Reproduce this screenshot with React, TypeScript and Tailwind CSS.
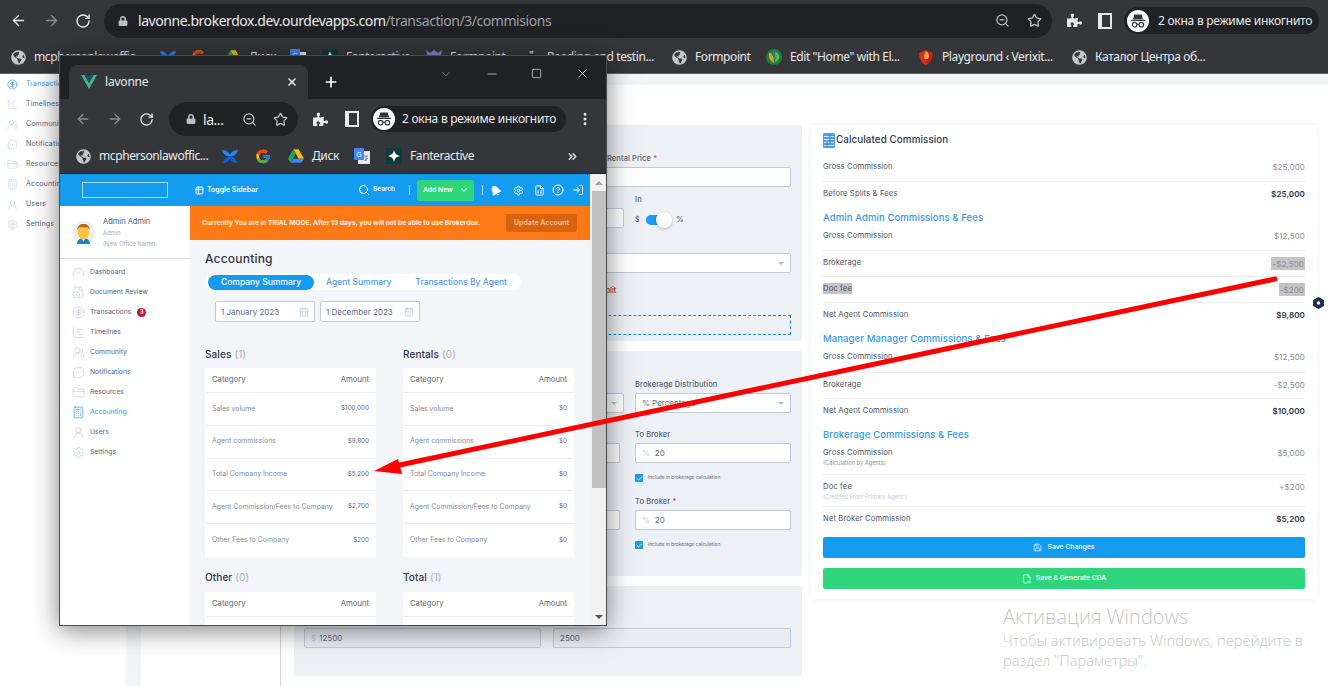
import {
  ArrowLeft,
  ArrowRight,
  RotateCw,
  ZoomOut,
  Star,
  X,
  Plus,
  Minus,
  Square,
  ChevronDown,
  ChevronsRight,
  EllipsisVertical,
  Search,
  Settings,
  FileSpreadsheet,
  CircleHelp,
  LogIn,
  Table2,
  Gauge,
  FileClock,
  CircleDollarSign,
  ChartGantt,
  UsersRound,
  MessageCircleMore,
  FolderClosed,
  Calculator,
  UserRound,
  CalendarDays,
  Check,
  Save,
  FilePlus2,
} from 'lucide-react'
import { FaGlobeAmericas, FaPuzzlePiece, FaLock, FaBell } from 'react-icons/fa'
import { FcGoogle } from 'react-icons/fc'
import type { ReactNode } from 'react'

const navItems = [
  { label: 'Dashboard', icon: Gauge },
  { label: 'Document Review', icon: FileClock },
  { label: 'Transactions', icon: CircleDollarSign, badge: 3 },
  { label: 'Timelines', icon: ChartGantt },
  { label: 'Community', icon: UsersRound },
  { label: 'Notifications', icon: MessageCircleMore },
  { label: 'Resources', icon: FolderClosed },
  { label: 'Accounting', icon: Calculator, active: true },
  { label: 'Users', icon: UserRound },
  { label: 'Settings', icon: Settings },
]

const backNav = [
  { label: 'Transactions', icon: CircleDollarSign, active: true },
  { label: 'Timelines', icon: ChartGantt },
  { label: 'Community', icon: UsersRound },
  { label: 'Notifications', icon: MessageCircleMore },
  { label: 'Resources', icon: FolderClosed },
  { label: 'Accounting', icon: Calculator },
  { label: 'Users', icon: UserRound },
  { label: 'Settings', icon: Settings },
]

const salesRows = [
  ['Sales volume', '$100,000'],
  ['Agent commissions', '$9,800'],
  ['Total Company Income', '$5,200'],
  ['Agent Commission/Fees to Company', '$2,700'],
  ['Other Fees to Company', '$200'],
]

const rentalRows = [
  ['Sales volume', '$0'],
  ['Agent commissions', '$0'],
  ['Total Company Income', '$0'],
  ['Agent Commission/Fees to Company', '$0'],
  ['Other Fees to Company', '$0'],
]

function DriveIcon() {
  return (
    <svg viewBox="0 0 24 22" className="size-[16px]">
      <path d="M8 1h8l8 14h-8z" fill="#fbbc04" />
      <path d="M8 1 0 15l4 6 8-14z" fill="#1fa463" />
      <path d="M4 21h16l4-6H8z" fill="#4285f4" />
    </svg>
  )
}

function TranslateIcon() {
  return (
    <svg viewBox="0 0 16 16" className="size-[16px]">
      <rect x="4" y="3" width="12" height="13" fill="#e8eaed" />
      <rect width="10" height="12" rx="1" fill="#4285f4" />
      <text x="5" y="9" fontSize="7" fill="#fff" textAnchor="middle" fontFamily="Liberation Sans">G</text>
      <path d="M10 8h4M12 8v5M10.5 13l3-3" stroke="#80868b" fill="none" />
    </svg>
  )
}

function FanteractiveIcon() {
  return (
    <svg viewBox="0 0 16 16" className="size-[16px]">
      <rect width="16" height="16" rx="1" fill="#0d3b3a" />
      <path d="M8 2c.6 3.6 2.400 5.400 6 6-3.600.6-5.400 2.400-6 6-.6-3.600-2.400-5.400-6-6 3.600-.6 5.400-2.400 6-6z" fill="#fff" />
    </svg>
  )
}

function BirdIcon() {
  return (
    <svg viewBox="0 0 16 16" className="size-[17px]">
      <path d="M0 1.500c4 0 6 2 8 4.500 2-2.500 4-4.500 8-4.500-1 4-4 6.500-8 6.500S1 5.500 0 1.500z" fill="#2684ff" />
      <path d="M1 14.500c1-4 3.500-6.500 7-6.500s6 2.500 7 6.500c-3.500 0-5.500-1.500-7-4-1.500 2.500-3.500 4-7 4z" fill="#0a5fd6" />
    </svg>
  )
}

function FormpointIcon() {
  return (
    <svg viewBox="0 0 16 16" className="size-[16px]">
      <path d="M0 1l4 3 4-3 4 3 4-3-3 14H3z" fill="#8e7bd8" />
      <path d="M5 6h6l-2 8H7z" fill="#f5c842" />
    </svg>
  )
}

function ReadingIcon() {
  return (
    <svg viewBox="0 0 16 16" className="size-[15px]">
      <rect x="6" y="1" width="4" height="3" fill="#aab0b6" />
      <path d="M5 4h6l2 11H3z" fill="#202124" />
      <rect x="5" y="8" width="6" height="3" fill="#9aa0a6" />
    </svg>
  )
}

function GreenGlobeIcon() {
  return (
    <svg viewBox="0 0 16 16" className="size-[16px]">
      <circle cx="8" cy="8" r="8" fill="#1d7f3c" />
      <path d="M3 4c3 0 5 3 5 10-3-1-6-5-5-10z" fill="#d9a520" />
      <path d="M9 3c3 0 5 3 4 7-1 2-3 3-4 3z" fill="#54b948" />
      <path d="M7 2c1 2 2 4 2 8" stroke="#2a6fd6" fill="none" strokeWidth="1.500" />
    </svg>
  )
}

function ShieldIcon() {
  return (
    <svg viewBox="0 0 16 16" className="size-[16px]">
      <path d="M1 4 8 1v15C4 14 1 10 1 4z" fill="#d93025" />
      <path d="M15 4 8 1v15c4-2 7-6 7-12z" fill="#c5221f" />
      <path d="M8 2c3 2 4 5 2 8H7C5 7 7 5 8 2z" fill="#f9ab30" />
    </svg>
  )
}

function IncognitoAvatar({ size }: { size: string }) {
  return (
    <svg viewBox="0 0 24 24" className={size}>
      <circle cx="12" cy="12" r="12" fill="#fff" />
      <path d="M8 5h8l1.500 5h-11zM4.500 10.500h15V12h-15z" fill="#35363a" />
      <circle cx="8.300" cy="16" r="2.500" fill="none" stroke="#35363a" strokeWidth="1.200" />
      <circle cx="15.700" cy="16" r="2.500" fill="none" stroke="#35363a" strokeWidth="1.200" />
      <path d="M10.800 15.500h2.400" stroke="#35363a" strokeWidth="1.200" />
    </svg>
  )
}

function SidePanelIcon() {
  return (
    <svg viewBox="0 0 14 16" className="h-[16px] w-[14px]">
      <rect x="1" y="1" width="12" height="14" fill="none" stroke="#e8eaed" strokeWidth="2" />
      <rect x="1" y="1" width="3" height="14" fill="#e8eaed" />
    </svg>
  )
}

function Bookmark({ width, icon, label }: { width: string; icon: ReactNode; label?: string }) {
  return (
    <div className={`flex shrink-0 items-center gap-[8px] ${width}`}>
      <span className="flex w-[16px] shrink-0 justify-center">{icon}</span>
      {label ? <span className="whitespace-nowrap text-[12px] tracking-[-0.4px] text-[#e8eaed]">{label}</span> : null}
    </div>
  )
}

const globe = <FaGlobeAmericas className="size-[15px] text-[#c4c7c5]" />

function BrowserBar() {
  return (
    <div className="font-['Noto_Sans',sans-serif]">
      <div className="flex h-[41px] items-center bg-[#35363a] pl-[10px]">
        <ArrowLeft className="size-[17px] text-[#e8eaed]" />
        <ArrowRight className="ml-[16px] size-[17px] text-[#8a8d91]" />
        <RotateCw className="ml-[15px] size-[16px] text-[#e8eaed]" />
        <div className="ml-[13px] flex h-[34px] w-[948px] items-center rounded-full bg-[#202124] pl-[14px] pr-[10px]">
          <FaLock className="size-[10px] text-[#bdc1c6]" />
          <span className="ml-[10px] whitespace-nowrap text-[14px] tracking-[-0.45px] text-[#e8eaed]">
            lavonne.brokerdox.dev.ourdevapps.com<span className="text-[#9aa0a6]">/transaction/3/commisions</span>
          </span>
          <ZoomOut className="ml-auto size-[15px] text-[#bdc1c6]" />
          <Star className="ml-[17px] size-[15px] text-[#bdc1c6]" />
        </div>
        <FaPuzzlePiece className="ml-[15px] size-[15px] text-[#e8eaed]" />
        <span className="ml-[16px]"><SidePanelIcon /></span>
        <div className="ml-[12px] flex h-[27px] w-[195px] items-center gap-[9px] rounded-full bg-[#202124] pl-[3px]">
          <IncognitoAvatar size="size-[22px]" />
          <span className="whitespace-nowrap text-[12px] tracking-[-0.25px] text-[#e8eaed]">2 окна в режиме инкогнито</span>
        </div>
      </div>
      <div className="flex h-[33px] items-center border-b border-[#5f6368] bg-[#35363a] pl-[10px]">
        <Bookmark width="w-[150px]" icon={globe} label="mcphersonlawoffic" />
        <Bookmark width="w-[31px]" icon={<BirdIcon />} />
        <Bookmark width="w-[34px]" icon={<FcGoogle className="size-[16px]" />} />
        <Bookmark width="w-[65px]" icon={<DriveIcon />} label="Диск" />
        <Bookmark width="w-[32px]" icon={<TranslateIcon />} />
        <Bookmark width="w-[104px]" icon={<FanteractiveIcon />} label="Fanteractive" />
        <Bookmark width="w-[97px]" icon={<FormpointIcon />} label="Formpoint" />
        <Bookmark width="w-[148px]" icon={<ReadingIcon />} label="Reading and testin..." />
        <Bookmark width="w-[95px]" icon={globe} label="Formpoint" />
        <Bookmark width="w-[152px]" icon={<GreenGlobeIcon />} label={'Edit "Home" with El...'} />
        <Bookmark width="w-[153px]" icon={<ShieldIcon />} label="Playground ‹ Verixit..." />
        <Bookmark width="w-[140px]" icon={globe} label="Каталог Центра об..." />
      </div>
    </div>
  )
}

function BackSidebar() {
  return (
    <div className="w-[126px] shrink-0 bg-white pl-[7px]">
      {backNav.map((item) => (
        <div key={item.label} className="flex h-[20px] items-center gap-[8px]">
          <item.icon className={`size-[11px] ${item.active ? 'text-[#3b97e3]' : 'text-[#c3cfe0]'}`} strokeWidth={1.4} />
          <span className={`text-[7px] tracking-[0.15px] ${item.active ? 'text-[#3b97e3]' : 'text-[#5b6577]'}`}>{item.label}</span>
        </div>
      ))}
    </div>
  )
}

function Field({ className, disabled, children }: { className?: string; disabled?: boolean; children?: ReactNode }) {
  return (
    <div
      className={`flex h-[20px] items-center rounded-[2px] border border-[#bfcadb] px-[6px] text-[8px] text-[#5f6b7e] ${disabled ? 'bg-[#e9edf3]' : 'bg-white'} ${className ?? ''}`}
    >
      {children}
    </div>
  )
}

function SelectArrow() {
  return <span className="ml-auto h-0 w-0 border-x-[3.500px] border-t-[3.500px] border-x-transparent border-t-[#b4bdca]" />
}

function FormLabel({ children }: { children: ReactNode }) {
  return <div className="h-[10px] text-[7.500px] font-medium leading-[10px] tracking-[0.1px] text-[#596479]">{children}</div>
}

function IncludeCheck() {
  return (
    <div className="mt-[11px] flex items-center gap-[5px]">
      <span className="flex size-[8px] items-center justify-center rounded-[1px] bg-[#1a9bf0]">
        <Check className="size-[7px] text-white" strokeWidth={3} />
      </span>
      <span className="text-[4.800px] text-[#5f6b7e]">Include in brokerage calculation</span>
    </div>
  )
}

function Required() {
  return <span className="text-[#d8334a]"> *</span>
}

function FormPanels() {
  return (
    <div className="flex w-[508px] flex-col gap-[10px]">
      <div className="h-[216px] rounded-[2px] bg-[#edf0f5] pl-[10px] pr-[11px] pt-[29px]">
        <div className="pl-[303px]">
          <FormLabel>Rental Price<Required /></FormLabel>
        </div>
        <Field className="mt-[3px]" />
        <div className="mt-[8px] flex gap-[11px]">
          <Field className="mt-[13px] w-[320px]" />
          <div>
            <FormLabel>In</FormLabel>
            <div className="mt-[5px] flex h-[20px] items-center text-[7px] font-medium text-[#596479]">
              <span>$</span>
              <span className="relative ml-[6px] h-[10px] w-[25px]">
                <span className="absolute left-0 top-0 h-[10px] w-[18px] rounded-full bg-[#1a9bf0]" />
                <span className="absolute left-[10px] top-[-3px] size-[16px] rounded-full bg-white shadow-[0_1px_3px_rgba(0,0,0,0.25)]" />
              </span>
              <span className="ml-[6px]">%</span>
            </div>
          </div>
        </div>
        <Field className="mt-[23px]"><SelectArrow /></Field>
        <div className="mt-[13px] h-[10px] pl-[280px] text-[7.500px] font-medium leading-[10px] text-[#b5364f]">Add Split</div>
        <div className="mt-[19px] h-[20px] border border-dashed border-[#1a8fd8]" />
      </div>

      <div className="h-[225px] rounded-[2px] bg-[#edf0f5] pl-[10px] pr-[11px] pt-[29px]">
        <div className="pl-[331px]"><FormLabel>Brokerage Distribution</FormLabel></div>
        <div className="mt-[3px] flex gap-[11px]">
          <Field className="w-[320px]"><SelectArrow /></Field>
          <Field className="flex-1">% Percentage<SelectArrow /></Field>
        </div>
        <div className="mt-[17px] pl-[331px]"><FormLabel>To Broker</FormLabel></div>
        <div className="mt-[3px] flex gap-[15px]">
          <Field className="w-[316px]" />
          <Field className="flex-1"><span className="mr-[5px] text-[#c3cbd8]">%</span>20</Field>
        </div>
        <div className="pl-[331px]"><IncludeCheck /></div>
        <div className="mt-[15px] pl-[331px]"><FormLabel>To Broker<Required /></FormLabel></div>
        <div className="mt-[3px] flex gap-[15px]">
          <Field className="w-[316px]" />
          <Field className="flex-1"><span className="mr-[5px] text-[#c3cbd8]">%</span>20</Field>
        </div>
        <div className="pl-[331px]"><IncludeCheck /></div>
      </div>

      <div className="flex h-[90px] gap-[12px] rounded-[2px] bg-[#edf0f5] pl-[10px] pr-[11px] pt-[42px]">
        <Field className="w-[237px]" disabled><span className="mr-[3px] text-[#b8c1ce]">$</span>12500</Field>
        <Field className="flex-1" disabled>2500</Field>
      </div>
    </div>
  )
}

function CalcRow({
  label,
  value,
  note,
  noteLight,
  strong,
  last,
  height,
  markLabel,
  markValue,
}: {
  label: string
  value: string
  note?: string
  noteLight?: boolean
  strong?: boolean
  last?: boolean
  height: string
  markLabel?: boolean
  markValue?: boolean
}) {
  return (
    <div className={`flex justify-between pt-[7px] ${height} ${last ? '' : 'border-b border-[#e9ecf0]'}`}>
      <div>
        <div className="h-[10px] text-[7.700px] leading-[10px] tracking-[0.1px] text-[#4d5565]">
          <span className={markLabel ? 'bg-[#c4c4c4] py-[1px]' : ''}>{label}</span>
        </div>
        {note ? (
          <div className={`h-[10px] text-[5.700px] leading-[10px] ${noteLight ? 'text-[#c3cbd8]' : 'text-[#8a93a3]'}`}>{note}</div>
        ) : null}
      </div>
      <div
        className={`h-[10px] text-[8px] leading-[10px] tracking-[0.1px] ${strong ? 'font-semibold text-[#2d3748]' : 'text-[#8b8f98]'}`}
      >
        <span className={markValue ? 'bg-[#c4c4c4] py-[1.500px] pl-[1px] pr-[1px]' : ''}>{value}</span>
      </div>
    </div>
  )
}

function SectionTitle({ children, height }: { children: ReactNode; height: string }) {
  return (
    <div className={`flex items-end text-[9.500px] font-medium leading-[12px] tracking-[0.1px] text-[#3b97e3] ${height}`}>
      {children}
    </div>
  )
}

function CommissionCard() {
  return (
    <div className="ml-[9px] h-[474px] w-[506px] bg-white px-[12px] pt-[8px] shadow-[0_0_6px_rgba(40,50,70,0.09)]">
      <div className="flex h-[15px] items-center gap-[1px] text-[9.800px] font-medium tracking-[0.1px] text-[#2d3748]">
        <svg viewBox="0 0 12 15" className="h-[15px] w-[12px]">
          <rect width="12" height="15" rx="1" fill="#4ea0ea" />
          <path d="M1 3.500h10M1 6.500h10M1 9.500h10M1 12.500h10" stroke="#dff0ff" strokeWidth="0.900" />
          <path d="M7 2v9M4 9v5" stroke="#1d6fbe" strokeWidth="0.800" />
        </svg>
        Calculated Commission
      </div>
      <div className="mt-[4px]">
        <CalcRow height="h-[30px] pt-[10px]" label="Gross Commission" value="$25,000" />
        <CalcRow height="h-[26px]" label="Before Splits & Fees" value="$25,000" strong last />
        <SectionTitle height="h-[16px]">Admin Admin Commissions &amp; Fees</SectionTitle>
        <CalcRow height="h-[27px]" label="Gross Commission" value="$12,500" />
        <CalcRow height="h-[26px]" label="Brokerage" value="-$2,500" markValue />
        <CalcRow height="h-[26px]" label="Doc fee" value="-$200" markLabel markValue />
        <CalcRow height="h-[26px]" label="Net Agent Commission" value="$9,800" strong last />
        <SectionTitle height="h-[16px]">Manager Manager Commissions &amp; Fees</SectionTitle>
        <CalcRow height="h-[28px]" label="Gross Commission" value="$12,500" />
        <CalcRow height="h-[26px]" label="Brokerage" value="-$2,500" />
        <CalcRow height="h-[26px]" label="Net Agent Commission" value="$10,000" strong last />
        <SectionTitle height="h-[16px]">Brokerage Commissions &amp; Fees</SectionTitle>
        <CalcRow height="h-[34px]" label="Gross Commission" note="(Calculation by Agents)" value="$5,000" />
        <CalcRow height="h-[32px]" label="Doc fee" note="(Credited From Primary Agent )" noteLight value="+$200" />
        <CalcRow height="h-[30px]" label="Net Broker Commission" value="$5,200" strong last />
      </div>
      <div className="flex h-[21px] items-center justify-center gap-[5px] rounded-[2px] bg-[#139bf0] text-[6.800px] font-semibold text-[#e8f5ff]">
        <Save className="size-[9px]" />
        Save Changes
      </div>
      <div className="mt-[10px] flex h-[21px] items-center justify-center gap-[4px] rounded-[2px] bg-[#2fd57a] text-[6.800px] font-semibold text-[#e9fff3]">
        <FilePlus2 className="size-[10px]" />
        Save &amp; Generate CDA
      </div>
    </div>
  )
}

function WindowBar() {
  return (
    <div className="shrink-0 font-['Noto_Sans',sans-serif]">
      <div className="flex h-[43px] items-end bg-[#202124] pl-[9px]">
        <div className="flex h-[34px] w-[239px] items-center rounded-t-[8px] bg-[#35363a] pl-[12px] pr-[10px]">
          <svg viewBox="0 0 16 14" className="h-[14px] w-[16px]">
            <path d="M0 0h3.500L8 8 12.500 0H16L8 14z" fill="#41b883" />
            <path d="M3.500 0h3L8 2.600 9.500 0h3L8 8z" fill="#35495e" />
          </svg>
          <span className="ml-[8px] text-[12px] tracking-[-0.2px] text-[#e8eaed]">lavonne</span>
          <X className="ml-auto size-[12px] text-[#e8eaed]" strokeWidth={3} />
        </div>
        <div className="flex h-[34px] items-center pl-[15px]">
          <Plus className="size-[16px] text-white" strokeWidth={2.500} />
        </div>
        <div className="mb-[18px] ml-auto flex items-center pr-[16px]">
          <ChevronDown className="size-[14px] text-[#c4c7c5]" strokeWidth={1} />
          <Minus className="ml-[32px] size-[14px] text-[#e8eaed]" strokeWidth={1.200} />
          <Square className="ml-[32px] size-[11px] text-[#e8eaed]" strokeWidth={1.500} />
          <X className="ml-[33px] size-[15px] text-[#e8eaed]" strokeWidth={1.200} />
        </div>
      </div>
      <div className="flex h-[40px] items-center bg-[#35363a] pl-[15px]">
        <ArrowLeft className="size-[16px] text-[#8a8d91]" />
        <ArrowRight className="ml-[16px] size-[16px] text-[#8a8d91]" />
        <RotateCw className="ml-[16px] size-[15px] text-[#e8eaed]" />
        <div className="ml-[15px] flex h-[34px] w-[129px] items-center rounded-full bg-[#202124] pl-[17px] pr-[10px]">
          <FaLock className="size-[10px] text-[#bdc1c6]" />
          <span className="ml-[7px] text-[14px] tracking-[-0.45px] text-[#e8eaed]">la...</span>
          <ZoomOut className="ml-auto size-[15px] text-[#bdc1c6]" />
          <Star className="ml-[16px] size-[15px] text-[#bdc1c6]" />
        </div>
        <FaPuzzlePiece className="ml-[15px] size-[15px] text-[#e8eaed]" />
        <span className="ml-[17px]"><SidePanelIcon /></span>
        <div className="ml-[12px] flex h-[26px] w-[195px] items-center gap-[7px] rounded-full bg-[#202124] pl-[2px]">
          <IncognitoAvatar size="size-[22px]" />
          <span className="whitespace-nowrap text-[12px] tracking-[-0.25px] text-[#e8eaed]">2 окна в режиме инкогнито</span>
        </div>
        <EllipsisVertical className="ml-[11px] size-[16px] text-[#e8eaed]" strokeWidth={2.500} />
      </div>
      <div className="flex h-[35px] items-center border-b border-[#202124] bg-[#35363a] pl-[15px]">
        <Bookmark width="w-[147px]" icon={globe} label="mcphersonlawoffic..." />
        <Bookmark width="w-[33px]" icon={<BirdIcon />} />
        <Bookmark width="w-[33px]" icon={<FcGoogle className="size-[17px]" />} />
        <Bookmark width="w-[66px]" icon={<DriveIcon />} label="Диск" />
        <Bookmark width="w-[32px]" icon={<TranslateIcon />} />
        <Bookmark width="w-[180px]" icon={<FanteractiveIcon />} label="Fanteractive" />
        <ChevronsRight className="size-[13px] text-[#e8eaed]" strokeWidth={2.500} />
      </div>
    </div>
  )
}

function TopIcons() {
  return (
    <div className="flex h-[32px] shrink-0 items-center whitespace-nowrap bg-[#139bf0] pl-[22px] pr-[6px] text-white">
      <div className="h-[16px] w-[86px] shrink-0 border border-[#a9dcfa]" />
      <Table2 className="ml-[27px] size-[9px] shrink-0" strokeWidth={2.500} />
      <span className="ml-[3px] text-[7px] font-semibold">Toggle Sidebar</span>
      <Search className="ml-auto size-[12px] shrink-0" />
      <span className="ml-[3px] w-[25px] shrink-0 text-[6.500px] font-semibold">Search</span>
      <span className="ml-[11px] h-[10px] w-px shrink-0 bg-[#a9dcfa]" />
      <div className="ml-[7px] flex h-[21px] w-[57px] shrink-0 items-center rounded-[2px] bg-[#2fd57a] pl-[6px] text-[6.800px] font-semibold">
        Add New
        <ChevronDown className="ml-[6px] size-[10px] shrink-0" strokeWidth={2.500} />
      </div>
      <span className="ml-[8px] h-[10px] w-px shrink-0 bg-[#a9dcfa]" />
      <FaBell className="ml-[7px] size-[11px] shrink-0 -rotate-[30deg]" />
      <Settings className="ml-[12px] size-[11px] shrink-0" />
      <FileSpreadsheet className="ml-[10px] size-[11px] shrink-0" />
      <CircleHelp className="ml-[7px] size-[12px] shrink-0" />
      <LogIn className="ml-[8px] size-[12px] shrink-0" />
    </div>
  )
}

function Avatar() {
  return (
    <svg viewBox="0 0 24 24" className="size-[23px]">
      <circle cx="12" cy="12" r="12" fill="#eeeeee" />
      <path d="M5 24c1-5 4-6 7-6s6 1 7 6z" fill="#2b7fb8" />
      <path d="M10 18l2 3 2-3z" fill="#fff" />
      <ellipse cx="12" cy="12" rx="6" ry="7" fill="#f9c33d" />
      <path d="M5.500 10c0-5 3-7 6.500-7s6.500 2 6.500 7c-1-2-2-3.500-3-3.500h-7c-1 0-2 1.500-3 3.500z" fill="#b6621f" />
    </svg>
  )
}

function AppSidebar() {
  return (
    <div className="w-[130px] shrink-0 bg-white">
      <div className="flex h-[53px] items-center gap-[8px] border-b border-[#dfe3e9] pl-[12px]">
        <Avatar />
        <div>
          <div className="text-[7.500px] leading-[11px] text-[#4d5565]">Admin Admin</div>
          <div className="text-[5.800px] leading-[11px] text-[#a6aebb]">Admin</div>
          <div className="text-[5.800px] leading-[11px] text-[#a6aebb]">(New Office Name)</div>
        </div>
      </div>
      <div className="pl-[12px] pt-[3px]">
        {navItems.map((item) => (
          <div key={item.label} className="flex h-[20px] items-center gap-[5px]">
            <item.icon className={`size-[13px] ${item.active ? 'text-[#3b97e3]' : 'text-[#bfcadb]'}`} strokeWidth={1.300} />
            <span className={`text-[6.800px] ${item.active ? 'text-[#3b97e3]' : 'text-[#5b6577]'}`}>{item.label}</span>
            {item.badge ? (
              <span className="ml-[1px] flex size-[9px] items-center justify-center rounded-full bg-[#c1122f] text-[5.500px] font-bold text-white">
                {item.badge}
              </span>
            ) : null}
          </div>
        ))}
      </div>
    </div>
  )
}

function SummaryTable({ title, count, rows }: { title: string; count: number; rows: string[][] }) {
  return (
    <div>
      <div className="flex h-[14px] items-center text-[10px] font-medium tracking-[0.1px] text-[#2d3748]">
        {title}
        <span className="ml-[3px] font-normal text-[#a6aebb]">({count})</span>
      </div>
      <div className="mt-[7px] bg-white">
        <div className="flex h-[25px] items-center justify-between border-b border-[#eceef2] px-[7px] text-[7.700px] text-[#596479]">
          <span>Category</span>
          <span>Amount</span>
        </div>
        {rows.map(([name, amount], i) => (
          <div
            key={name}
            className={`flex h-[32.750px] items-center justify-between px-[7px] ${i < rows.length - 1 ? 'border-b border-[#eceef2]' : ''}`}
          >
            <span className="whitespace-nowrap text-[6.900px] text-[#888c95]">{name}</span>
            <span className="text-[6.300px] text-[#596479]">{amount}</span>
          </div>
        ))}
      </div>
    </div>
  )
}

function DateBox({ value }: { value: string }) {
  return (
    <div className="flex h-[21px] w-[100px] items-center justify-between rounded-[2px] border border-[#bfcadb] bg-white px-[5px] text-[8px] text-[#5f6b7e]">
      {value}
      <CalendarDays className="size-[10px] text-[#bfcadb]" />
    </div>
  )
}

function Accounting() {
  return (
    <div className="flex-1 overflow-hidden bg-[#f4f5f8]">
      <div className="flex h-[34px] items-center whitespace-nowrap bg-[#fd7a17] pl-[12px] pr-[13px] text-[6.700px] font-bold text-[#ffeede]">
        Currently You are in TRIAL MODE. After 13 days, you will not be able to use Brokerdox.
        <div className="ml-auto flex h-[18px] w-[71px] items-center justify-center rounded-[2px] bg-[#d8620d] text-[7px] text-[#f3b98a]">
          Update Account
        </div>
      </div>
      <div className="pl-[15px] pr-[16px] pt-[11px]">
        <div className="h-[16px] text-[12px] font-medium leading-[16px] tracking-[0.2px] text-[#2d3748]">Accounting</div>
        <div className="ml-[1px] mt-[7px] flex h-[16px] w-[315px] items-center whitespace-nowrap rounded-full bg-white text-[8.500px] font-medium text-[#4f9ae0]">
          <span className="ml-[2px] flex h-[15px] w-[106px] items-center justify-center rounded-full bg-[#139bf0] text-white">
            Company Summary
          </span>
          <span className="ml-[12px]">Agent Summary</span>
          <span className="ml-[24px]">Transactions By Agent</span>
        </div>
        <div className="ml-[10px] mt-[11px] flex gap-[5px]">
          <DateBox value="1 January 2023" />
          <DateBox value="1 December 2023" />
        </div>
        <div className="mt-[25px] grid grid-cols-[171px_171px] gap-x-[27px] gap-y-[14px]">
          <SummaryTable title="Sales" count={1} rows={salesRows} />
          <SummaryTable title="Rentals" count={0} rows={rentalRows} />
          <SummaryTable title="Other" count={0} rows={salesRows} />
          <SummaryTable title="Total" count={1} rows={rentalRows} />
        </div>
      </div>
    </div>
  )
}

function Scrollbar() {
  return (
    <div className="flex w-[16px] shrink-0 flex-col items-center bg-[#f1f1f1] pl-[1px]">
      <div className="flex h-[17px] shrink-0 items-center justify-center">
        <span className="h-0 w-0 border-x-[4px] border-b-[4px] border-x-transparent border-b-[#a3a3a3]" />
      </div>
      <div className="h-[297px] w-[14px] bg-[#c1c1c1]" />
      <div className="mt-auto flex h-[17px] items-center justify-center">
        <span className="h-0 w-0 border-x-[4px] border-t-[4px] border-x-transparent border-t-[#505050]" />
      </div>
    </div>
  )
}

function IncognitoWindow() {
  return (
    <div className="absolute left-[59px] top-[55px] flex h-[571px] w-[548px] flex-col border border-[#4a4b4d] shadow-[0_4px_24px_rgba(0,0,0,0.5)]">
      <WindowBar />
      <div className="flex min-h-0 flex-1">
        <div className="flex min-w-0 flex-1 flex-col">
          <TopIcons />
          <div className="flex min-h-0 flex-1">
            <AppSidebar />
            <Accounting />
          </div>
        </div>
        <Scrollbar />
      </div>
    </div>
  )
}

export default function App() {
  return (
    <div className="relative flex h-[686px] w-[1328px] flex-col overflow-hidden bg-white font-['Inter',sans-serif]">
      <BrowserBar />
      <div className="flex min-h-0 flex-1">
        <BackSidebar />
        <div className="w-[15px] shrink-0 bg-[#f4f5f8]" />
        <div className="min-w-0 flex-1">
          <div className="h-[11px] bg-[#f4f5f8]" />
          <div className="flex h-full">
            <div className="w-[140px] shrink-0 border-r border-[#d4d4d4]" />
            <div className="flex pl-[13px] pt-[40px]">
              <FormPanels />
              <CommissionCard />
            </div>
          </div>
        </div>
      </div>

      <IncognitoWindow />

      <svg viewBox="0 0 1328 686" className="pointer-events-none absolute left-0 top-0 h-[686px] w-[1328px]">
        <path d="M1275 279 395 466" stroke="#fe0000" strokeWidth="5" strokeLinecap="round" />
        <path d="M374 471 398 459 402 474z" fill="#fe0000" />
      </svg>

      <div className="absolute left-[1308px] top-[293px] flex size-[20px] items-center justify-center rounded-full bg-white">
        <svg viewBox="0 0 10 11" className="h-[12px] w-[11px]">
          <path d="M5 0 10 2.700v5.600L5 11 0 8.300V2.700z" fill="#16304f" />
          <circle cx="5" cy="5.500" r="1.600" fill="#fff" />
        </svg>
      </div>

      <div className="absolute left-[1003px] top-[603px] font-['Open_Sans',sans-serif] font-light text-[#c6c6c6]">
        <div className="text-[20px] leading-[27px]">Активация Windows</div>
        <div className="w-[310px] text-[14.700px] leading-[20px]">
          Чтобы активировать Windows, перейдите в раздел "Параметры".
        </div>
      </div>
    </div>
  )
}
